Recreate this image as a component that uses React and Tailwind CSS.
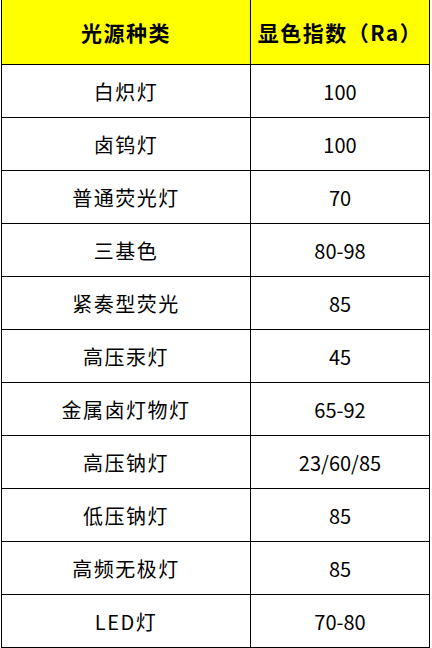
const rows = [
  ["白炽灯", "100"],
  ["卤钨灯", "100"],
  ["普通荧光灯", "70"],
  ["三基色", "80-98"],
  ["紧奏型荧光", "85"],
  ["高压汞灯", "45"],
  ["金属卤灯物灯", "65-92"],
  ["高压钠灯", "23/60/85"],
  ["低压钠灯", "85"],
  ["高频无极灯", "85"],
  ["LED灯", "70-80"],
];

export default function App() {
  return (
    <div
      className="w-[432px] h-[648px] bg-white pl-[1px] overflow-hidden text-black"
      style={{ fontFamily: '"Noto Sans CJK SC", "Noto Sans", sans-serif' }}
    >
      <div className="w-[429px] border-l border-r border-black">
        <div className="flex h-[65px] border-b border-black bg-[#ffff00] font-bold text-[21px] tracking-[1.5px]">
          <div className="w-[249px] border-r border-black flex items-center justify-center pt-[1px]">
            光源种类
          </div>
          <div className="flex-1 flex items-center justify-center pt-[1px]">
            显色指数（Ra）
          </div>
        </div>
        {rows.map(([a, b]) => (
          <div key={a} className="flex h-[53px] border-b border-black text-[20px]">
            <div className="w-[249px] border-r border-black flex items-center justify-center tracking-[1.5px] pt-[2px]">
              {a}
            </div>
            <div className="flex-1 flex items-center justify-center pt-[2px]">
              {b}
            </div>
          </div>
        ))}
      </div>
    </div>
  );
}
